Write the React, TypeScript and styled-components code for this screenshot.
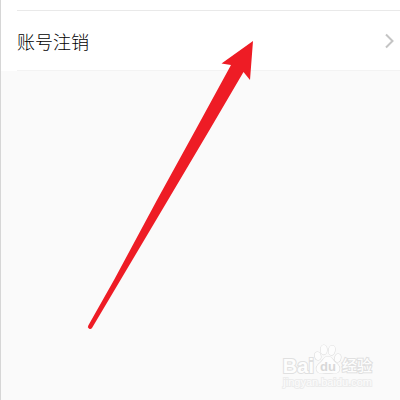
import React from "react";
import styled, { createGlobalStyle } from "styled-components";

const GlobalStyle = createGlobalStyle`
  *, *::before, *::after { box-sizing: border-box; }
  body {
    margin: 0;
    background: #fafafa;
    font-family: "Noto Sans CJK SC", sans-serif;
  }
`;

const Page = styled.div`
  position: relative;
  min-height: 100vh;
  overflow: hidden;
  border-left: 1px solid #d6d6d6;
  background: #fafafa;
`;

const SettingsList = styled.ul`
  margin: 0;
  padding: 10px 0 0 16px;
  list-style: none;
  background: #ffffff;
`;

const SettingsItem = styled.li`
  border-top: 1px solid #e9e9e9;
  border-bottom: 1px solid #f3f3f3;
`;

const RowButton = styled.button`
  display: flex;
  align-items: center;
  justify-content: space-between;
  width: 100%;
  height: 59px;
  padding: 0 6px 0 0;
  border: 0;
  background: transparent;
  color: #000000;
  font-family: inherit;
  font-size: 18px;
  font-weight: 300;
  line-height: 24px;
  text-align: left;
  cursor: pointer;
`;

const Chevron = styled.svg`
  display: block;
  width: 10px;
  height: 16px;
`;

const PointerArrow = styled.svg`
  position: absolute;
  top: 40px;
  left: 86px;
  width: 170px;
  height: 292px;
  pointer-events: none;
`;

const Watermark = styled.div`
  position: absolute;
  right: 28px;
  bottom: 12px;
  display: flex;
  flex-direction: column;
  align-items: flex-end;
  color: #fdfdfd;
  -webkit-text-stroke: 2px #e0e0e0;
  paint-order: stroke fill;
  pointer-events: none;
`;

const Brand = styled.div`
  display: flex;
  align-items: flex-end;
  height: 32px;
`;

const BrandName = styled.span`
  font-family: "Liberation Sans", sans-serif;
  font-size: 20px;
  font-weight: 700;
  line-height: 20px;
`;

const PawMark = styled.span`
  position: relative;
  display: block;
  height: 32px;
`;

const PawShape = styled.svg`
  display: block;
  width: 28px;
  height: 32px;
`;

const PawText = styled.span`
  position: absolute;
  left: 0;
  right: 0;
  bottom: 2px;
  color: #d8d8d8;
  font-family: "Liberation Sans", sans-serif;
  font-size: 13px;
  font-weight: 700;
  line-height: 14px;
  text-align: center;
  -webkit-text-stroke: 0;
`;

const BrandSection = styled.span`
  font-size: 15px;
  font-weight: 500;
  line-height: 22px;
`;

const SiteAddress = styled.span`
  color: #fcfcfc;
  font-family: "Liberation Sans", sans-serif;
  font-size: 11px;
  line-height: 12px;
  -webkit-text-stroke: 2px #ececec;
`;

export default function App() {
  return (
    <>
      <GlobalStyle />
      <Page>
        <SettingsList>
          <SettingsItem>
            <RowButton type="button">
              <span>账号注销</span>
              <Chevron viewBox="0 0 10 16" aria-hidden="true">
                <path d="M2 1.5 L8.5 8 L2 14.5" fill="none" stroke="#c4c4c4" strokeWidth="2" />
              </Chevron>
            </RowButton>
          </SettingsItem>
        </SettingsList>

        <PointerArrow viewBox="87 40 170 292" aria-hidden="true">
          <path
            d="M253 41 L221.5 63.5 L231 65 L195.5 130 L157 200 L114 280 L88.3 325.5 A2.2 2.2 0 0 0 92 328 L120.5 280 L168 200 L209.5 130 L243.5 72 L250 80 Z"
            fill="#ee1c25"
          />
        </PointerArrow>

        <Watermark>
          <Brand>
            <BrandName>Bai</BrandName>
            <PawMark>
              <PawShape viewBox="0 0 28 32" aria-hidden="true">
                <g fill="#fdfdfd" stroke="#dedede" strokeWidth="1.2">
                  <ellipse cx="3.8" cy="12" rx="3" ry="4" transform="rotate(-12 3.8 12)" />
                  <ellipse cx="9.8" cy="5.8" rx="3.2" ry="4.8" />
                  <ellipse cx="17.8" cy="6.3" rx="3.2" ry="4.8" transform="rotate(10 17.8 6.3)" />
                  <ellipse cx="23.8" cy="14" rx="3" ry="4" transform="rotate(12 23.8 14)" />
                  <path d="M14 12.5 C10 12.5 9.5 16 6.5 18.5 C3 21 1.5 24 3 27 C5 30.5 9 29.3 14 29.3 C19 29.3 23 30.5 25 27 C26.5 24 25 21 21.5 18.5 C18.5 16 18 12.5 14 12.5 Z" />
                </g>
              </PawShape>
              <PawText>du</PawText>
            </PawMark>
            <BrandSection>经验</BrandSection>
          </Brand>
          <SiteAddress>jingyan.baidu.com</SiteAddress>
        </Watermark>
      </Page>
    </>
  );
}
